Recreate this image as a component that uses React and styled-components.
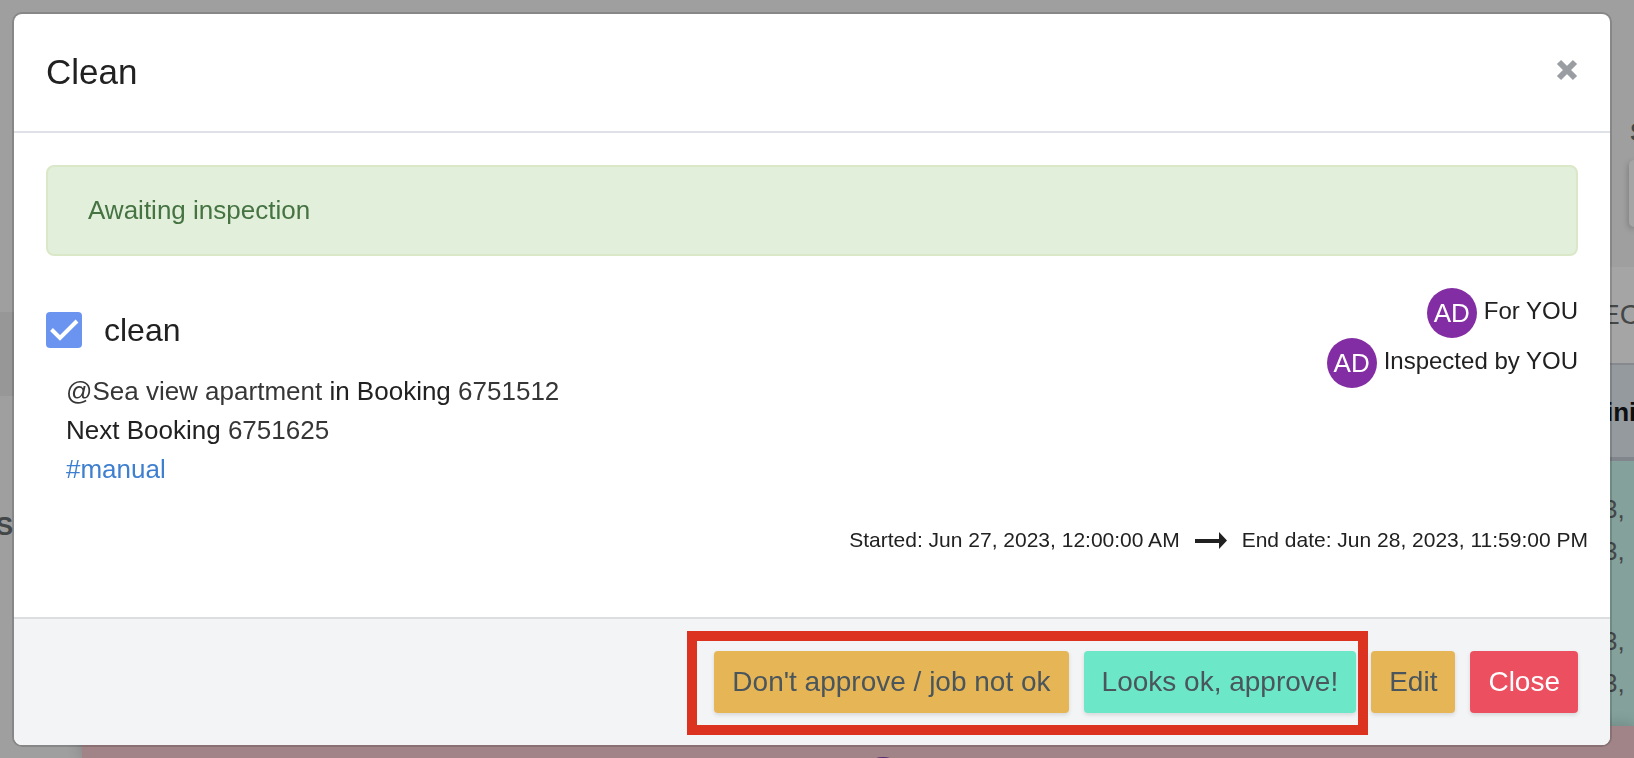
import { useState } from "react";
import styled, { createGlobalStyle } from "styled-components";

const notes = ["3,", "3,", "", "3,", "3,"];

export default function App() {
  const [done, setDone] = useState(true);

  return (
    <>
      <GlobalStyle />
      <Page aria-hidden="true">
        <Sidebar>
          <SidebarActive />
          <SidebarText>S</SidebarText>
        </Sidebar>
        <Main>
          <Filters>
            <FilterLabel>S</FilterLabel>
            <FilterBox />
          </Filters>
          <Toolbar>
            <Edge>EC</Edge>
          </Toolbar>
          <TableHead>
            <Edge>ini</Edge>
          </TableHead>
          <GreenRow>
            {notes.map((note, index) => (
              <Note key={index}>{note}</Note>
            ))}
          </GreenRow>
          <PinkRow>
            <RowAvatar />
          </PinkRow>
        </Main>
      </Page>

      <Overlay>
        <Modal role="dialog" aria-labelledby="modal-title">
          <Header>
            <Title id="modal-title">Clean</Title>
            <CloseIcon type="button" aria-label="Close dialog">
              <svg width="24" height="24" viewBox="0 0 24 24">
                <path
                  d="M4 4L20 20M20 4L4 20"
                  stroke="currentColor"
                  strokeWidth="6"
                  strokeLinecap="butt"
                />
              </svg>
            </CloseIcon>
          </Header>

          <Body>
            <Alert>Awaiting inspection</Alert>
            <Details>
              <Job>
                <CheckLabel>
                  <CheckBox>
                    <input
                      type="checkbox"
                      checked={done}
                      onChange={(e) => setDone(e.target.checked)}
                    />
                    {done && (
                      <svg width="36" height="36" viewBox="0 0 36 36">
                        <path
                          d="M5.500 17.500L14 26L31 9"
                          fill="none"
                          stroke="#fff"
                          strokeWidth="4"
                        />
                      </svg>
                    )}
                  </CheckBox>
                  clean
                </CheckLabel>
                <Info>
                  <p>
                    <span>@Sea view apartment</span> in Booking{" "}
                    <span>6751512</span>
                  </p>
                  <p>
                    Next Booking <span>6751625</span>
                  </p>
                  <a href="#manual">#manual</a>
                </Info>
              </Job>
              <People>
                <Person>
                  <Avatar>AD</Avatar>
                  For YOU
                </Person>
                <Person>
                  <Avatar>AD</Avatar>
                  Inspected by YOU
                </Person>
              </People>
            </Details>
            <Dates>
              <span>Started: Jun 27, 2023, 12:00:00 AM</span>
              <svg width="32" height="18" viewBox="0 0 32 18">
                <path d="M0 8H24V1L32 9.500L24 18V12H0Z" fill="#212121" />
              </svg>
              <span>End date: Jun 28, 2023, 11:59:00 PM</span>
            </Dates>
          </Body>

          <Footer>
            <Review>
              <Button $color="#e6b656">Don't approve / job not ok</Button>
              <Button $color="#6ce8c8">Looks ok, approve!</Button>
              <Highlight />
            </Review>
            <Button $color="#e6b656">Edit</Button>
            <Button $color="#ec4f5f" $text="#fff">
              Close
            </Button>
          </Footer>
        </Modal>
      </Overlay>
    </>
  );
}

const GlobalStyle = createGlobalStyle`
  * {
    box-sizing: border-box;
  }

  body {
    margin: 0;
    overflow: hidden;
    background: #9f9f9f;
    color: #212121;
    font-family: "Liberation Sans", Arial, sans-serif;
    font-size: 26px;
  }

  h1,
  p {
    margin: 0;
  }

  svg {
    display: block;
    flex: none;
  }
`;

const Page = styled.div`
  display: flex;
  height: 100vh;
  overflow: hidden;
  color: #444748;
`;

const Sidebar = styled.div`
  width: 82px;
  flex: none;
  padding-top: 312px;
`;

const SidebarActive = styled.div`
  height: 84px;
  background: #979797;
`;

const SidebarText = styled.div`
  display: flex;
  justify-content: flex-end;
  width: 13px;
  margin-top: 115px;
  line-height: 30px;
  font-weight: bold;
`;

const Main = styled.div`
  flex: 1;
  min-width: 0;
  display: flex;
  flex-direction: column;
  align-items: stretch;
`;

const Filters = styled.div`
  display: flex;
  flex-direction: column;
  align-items: flex-end;
  height: 267px;
  padding-top: 117px;
`;

const FilterLabel = styled.div`
  width: 4px;
  overflow: hidden;
  line-height: 30px;
  font-weight: bold;
`;

const FilterBox = styled.div`
  width: 5px;
  height: 67px;
  margin-top: 13px;
  border-radius: 8px 0 0 8px;
  background: #a5a5a5;
  box-shadow: 0 2px 6px rgba(0, 0, 0, 0.3);
`;

const TableRow = styled.div`
  display: flex;
  justify-content: flex-end;
  overflow: hidden;
`;

const Edge = styled.div`
  width: 33px;
  overflow: hidden;
  white-space: nowrap;
`;

const Toolbar = styled(TableRow)`
  height: 96px;
  background: #a5a5a5;
  font-size: 28px;
  line-height: 96px;
`;

const TableHead = styled(TableRow)`
  height: 98px;
  border-top: 2px solid #868a8f;
  border-bottom: 4px solid #80868b;
  background: #959a9e;
  color: #0d0f10;
  font-weight: bold;
  line-height: 94px;

  ${Edge} {
    width: 28px;
  }
`;

const GreenRow = styled.div`
  display: flex;
  flex-direction: column;
  align-items: flex-end;
  height: 265px;
  padding-top: 27px;
  background: #84a19b;
`;

const Note = styled.div`
  width: 31px;
  height: 42px;
  line-height: 42px;

  &:empty {
    height: 48px;
  }
`;

const PinkRow = styled.div`
  flex: 1;
  padding-top: 31px;
  overflow: hidden;
  background: #a08488;
  box-shadow: 0 0 16px rgba(0, 0, 0, 0.2);
`;

const RowAvatar = styled.div`
  width: 50px;
  height: 50px;
  margin-left: 50%;
  border-radius: 50%;
  background: #55286b;
`;

const Overlay = styled.div`
  position: fixed;
  inset: 0;
  padding: 12px 22px 11px 12px;
`;

const Modal = styled.div`
  border: 2px solid rgba(0, 0, 0, 0.15);
  border-radius: 10px;
  background: #fff;
  background-clip: padding-box;
  overflow: hidden;
`;

const Header = styled.header`
  display: flex;
  align-items: center;
  justify-content: space-between;
  padding: 37px 32px 39px;
  border-bottom: 2px solid #dee2e6;
`;

const Title = styled.h1`
  font-size: 35px;
  font-weight: 300;
  line-height: 41px;
`;

const CloseIcon = styled.button`
  margin-right: -1px;
  padding: 0 0 4px;
  border: none;
  background: none;
  color: #9a9ea2;
  cursor: pointer;
`;

const Body = styled.main`
  padding: 32px;
`;

const Alert = styled.div`
  padding: 28px 40px;
  border: 2px solid #dae8c8;
  border-radius: 8px;
  background: #e2efdb;
  color: #467342;
  line-height: 31px;
`;

const Details = styled.div`
  display: flex;
  justify-content: space-between;
  margin-top: 32px;
`;

const Job = styled.div`
  padding-top: 24px;
`;

const CheckLabel = styled.label`
  display: flex;
  align-items: center;
  gap: 22px;
  height: 36px;
  font-size: 32px;
  font-weight: 300;
`;

const CheckBox = styled.span`
  display: grid;

  & > * {
    grid-area: 1 / 1;
  }

  & > input {
    appearance: none;
    width: 36px;
    height: 36px;
    margin: 0;
    border-radius: 4px;
    background: #6b94f0;
  }

  & > svg {
    pointer-events: none;
  }
`;

const Info = styled.div`
  margin-top: 24px;
  padding-left: 20px;
  line-height: 39px;

  span {
    color: #363636;
  }

  a {
    color: #3f7fd0;
    text-decoration: none;
  }
`;

const People = styled.div`
  display: flex;
  flex-direction: column;
  align-items: flex-end;
`;

const Person = styled.div`
  display: flex;
  gap: 7px;
  font-size: 24px;
  line-height: 46px;
`;

const Avatar = styled.span`
  width: 50px;
  height: 50px;
  border-radius: 50%;
  background: #822da3;
  color: #fff;
  font-size: 26px;
  line-height: 50px;
  text-align: center;
`;

const Dates = styled.div`
  display: flex;
  align-items: center;
  justify-content: flex-end;
  gap: 15px;
  margin: 35px -10px 29px 0;
  font-size: 21px;
  line-height: 32px;
`;

const Footer = styled.footer`
  display: flex;
  justify-content: flex-end;
  gap: 15px;
  padding: 32px;
  border-top: 2px solid #dcdfe2;
  background: #f3f4f6;
`;

const Review = styled.div`
  position: relative;
  display: flex;
  gap: 15px;
`;

const Highlight = styled.div`
  position: absolute;
  inset: -20px -12px -22px -27px;
  border: 10px solid #dc3220;
  pointer-events: none;
`;

const Button = styled.button`
  height: 62px;
  padding: 0 18px;
  border: none;
  border-radius: 4px;
  background: ${(props) => props.$color};
  box-shadow: 0 2px 4px rgba(0, 0, 0, 0.12);
  color: ${(props) => props.$text || "#4a555c"};
  font-family: inherit;
  font-size: 28px;
  cursor: pointer;
`;
